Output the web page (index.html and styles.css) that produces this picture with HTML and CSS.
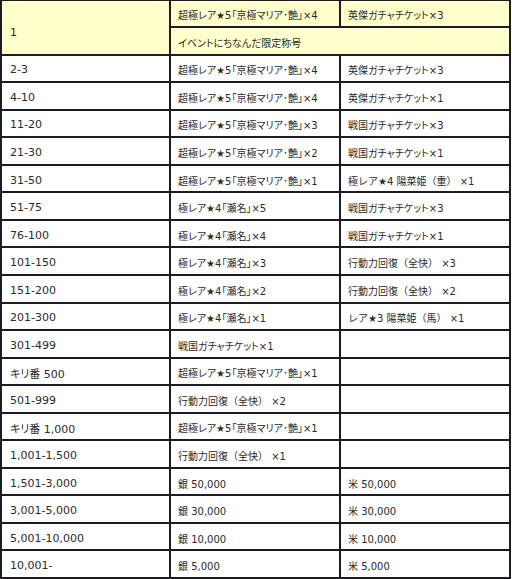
FILE: index.html
```html
<!DOCTYPE html>
<html lang="ja">
<head>
<meta charset="utf-8">
<link rel="stylesheet" href="styles.css">
</head>
<body>
<div class="table">
  <div class="cell rank hl span2">1</div>
  <div class="cell hl">超極レア★5「京極マリア･艶」×4</div>
  <div class="cell hl">英傑ガチャチケット×3</div>
  <div class="cell hl wide">イベントにちなんだ限定称号</div>

  <div class="cell rank">2-3</div><div class="cell">超極レア★5「京極マリア･艶」×4</div><div class="cell">英傑ガチャチケット×3</div>
  <div class="cell rank">4-10</div><div class="cell">超極レア★5「京極マリア･艶」×4</div><div class="cell">英傑ガチャチケット×1</div>
  <div class="cell rank">11-20</div><div class="cell">超極レア★5「京極マリア･艶」×3</div><div class="cell">戦国ガチャチケット×3</div>
  <div class="cell rank">21-30</div><div class="cell">超極レア★5「京極マリア･艶」×2</div><div class="cell">戦国ガチャチケット×1</div>
  <div class="cell rank">31-50</div><div class="cell">超極レア★5「京極マリア･艶」×1</div><div class="cell full">極レア★4 陽菜姫（重） ×1</div>
  <div class="cell rank">51-75</div><div class="cell">極レア★4「瀬名」×5</div><div class="cell">戦国ガチャチケット×3</div>
  <div class="cell rank">76-100</div><div class="cell">極レア★4「瀬名」×4</div><div class="cell">戦国ガチャチケット×1</div>
  <div class="cell rank">101-150</div><div class="cell">極レア★4「瀬名」×3</div><div class="cell full">行動力回復（全快） ×3</div>
  <div class="cell rank">151-200</div><div class="cell">極レア★4「瀬名」×2</div><div class="cell full">行動力回復（全快） ×2</div>
  <div class="cell rank">201-300</div><div class="cell">極レア★4「瀬名」×1</div><div class="cell full">レア★3 陽菜姫（馬） ×1</div>
  <div class="cell rank">301-499</div><div class="cell">戦国ガチャチケット×1</div><div class="cell"></div>
  <div class="cell rank">キリ番 500</div><div class="cell">超極レア★5「京極マリア･艶」×1</div><div class="cell"></div>
  <div class="cell rank">501-999</div><div class="cell full">行動力回復（全快） ×2</div><div class="cell"></div>
  <div class="cell rank">キリ番 1,000</div><div class="cell">超極レア★5「京極マリア･艶」×1</div><div class="cell"></div>
  <div class="cell rank">1,001-1,500</div><div class="cell full">行動力回復（全快） ×1</div><div class="cell"></div>
  <div class="cell rank">1,501-3,000</div><div class="cell">銀 50,000</div><div class="cell">米 50,000</div>
  <div class="cell rank">3,001-5,000</div><div class="cell">銀 30,000</div><div class="cell">米 30,000</div>
  <div class="cell rank">5,001-10,000</div><div class="cell">銀 10,000</div><div class="cell">米 10,000</div>
  <div class="cell rank">10,001-</div><div class="cell">銀 5,000</div><div class="cell">米 5,000</div>
</div>
</body>
</html>
```

FILE: styles.css
```css
html, body {
  margin: 0;
  padding: 0;
  background: #ffffff;
}

.table {
  width: 511px;
  box-sizing: border-box;
  display: grid;
  grid-template-columns: 167px 168px 168px;
  grid-auto-rows: 25.55px;
  gap: 2px;
  padding: 0.5px 2px 2px 2px;
  background: #1c1c26;
}

.cell {
  background: #ffffff;
  display: flex;
  align-items: center;
  padding: 3px 0 0 7px;
  box-sizing: border-box;
  font-family: "DejaVu Sans", "Noto Sans CJK JP", sans-serif;
  font-size: 10px;
  color: #2a2a2a;
  white-space: nowrap;
  font-feature-settings: "palt";
}

.rank {
  font-size: 11px;
  padding-left: 8px;
}

.full {
  font-feature-settings: normal;
}

.hl {
  background: #ffffcc;
}

.span2 {
  grid-row: span 2;
  padding-top: 10px;
}

.wide {
  grid-column: span 2;
}
```
